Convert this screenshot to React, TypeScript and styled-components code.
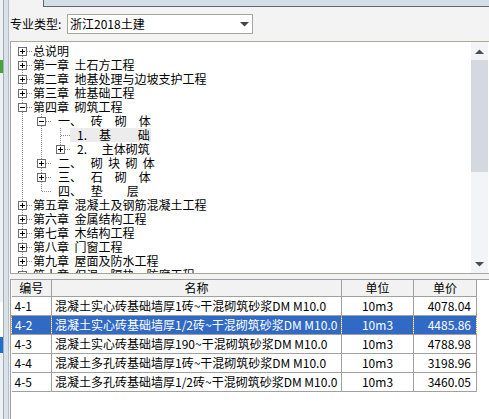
import React from 'react';
import styled, { createGlobalStyle } from 'styled-components';

type Kind = 'plus' | 'minus' | 'leaf';

type TreeItem = {
  text: string;
  level: number;
  kind: Kind;
  guides?: boolean[];
  first?: boolean;
  last?: boolean;
  selected?: boolean;
};

const SP = '\u2002';
const IS = '\u3000';

const TREE: TreeItem[] = [
  { text: '总说明', level: 0, kind: 'plus', first: true },
  { text: '第一章  土石方工程', level: 0, kind: 'plus' },
  { text: '第二章  地基处理与边坡支护工程', level: 0, kind: 'plus' },
  { text: '第三章  桩基础工程', level: 0, kind: 'plus' },
  { text: '第四章  砌筑工程', level: 0, kind: 'minus' },
  { text: `${SP}一、${IS} 砖${IS}砌${IS}体`, level: 1, kind: 'minus', guides: [true] },
  { text: `${SP}1.${IS}基${IS}${IS} 础`, level: 2, kind: 'leaf', guides: [true, true], selected: true },
  { text: `${SP}2.${IS} 主体砌筑`, level: 2, kind: 'plus', guides: [true, true], last: true },
  { text: `${SP}二、${IS} 砌  块  砌  体`, level: 1, kind: 'plus', guides: [true] },
  { text: `${SP}三、${IS} 石${IS}砌${IS}体`, level: 1, kind: 'plus', guides: [true] },
  { text: `${SP}四、${IS} 垫${IS}${IS}层`, level: 1, kind: 'leaf', guides: [true], last: true },
  { text: '第五章  混凝土及钢筋混凝土工程', level: 0, kind: 'plus' },
  { text: '第六章  金属结构工程', level: 0, kind: 'plus' },
  { text: '第七章  木结构工程', level: 0, kind: 'plus' },
  { text: '第八章  门窗工程', level: 0, kind: 'plus' },
  { text: '第九章  屋面及防水工程', level: 0, kind: 'plus' },
  { text: '第十章  保温、隔热、防腐工程', level: 0, kind: 'plus' },
  { text: '第十一章  楼地面装饰工程', level: 0, kind: 'plus' },
];

const ROWS = [
  { code: '4-1', name: '混凝土实心砖基础墙厚1砖~干混砌筑砂浆DM M10.0', unit: '10m3', price: '4078.04' },
  { code: '4-2', name: '混凝土实心砖基础墙厚1/2砖~干混砌筑砂浆DM M10.0', unit: '10m3', price: '4485.86', selected: true },
  { code: '4-3', name: '混凝土实心砖基础墙厚190~干混砌筑砂浆DM M10.0', unit: '10m3', price: '4788.98' },
  { code: '4-4', name: '混凝土多孔砖基础墙厚1砖~干混砌筑砂浆DM M10.0', unit: '10m3', price: '3198.96' },
  { code: '4-5', name: '混凝土多孔砖基础墙厚1/2砖~干混砌筑砂浆DM M10.0', unit: '10m3', price: '3460.05' },
];

const GlobalStyle = createGlobalStyle`
  html, body {
    margin: 0;
    padding: 0;
    background: #f3f3f3;
  }
  body {
    font-family: "Noto Sans CJK SC", "Noto Sans", sans-serif;
    font-size: 12px;
    color: #000;
  }
`;

const Screen = styled.div`
  display: flex;
  width: 489px;
  height: 419px;
  overflow: hidden;
`;

const LeftEdge = styled.div`
  width: 10px;
  flex-shrink: 0;
  display: flex;
  flex-direction: column;
  background: linear-gradient(
    to right,
    #eef1f4 0 3px,
    #a3adb6 3px 4px,
    #d8e1e8 4px 8px,
    #b4bec7 8px 9px,
    #eef0f2 9px 10px
  );
`;

const Mark = styled.div<{ $top: number; $h: number; $color: string }>`
  width: 3px;
  margin-top: ${(p) => p.$top}px;
  height: ${(p) => p.$h}px;
  background: ${(p) => p.$color};
`;

const Main = styled.div`
  flex: 1;
  min-width: 0;
  display: flex;
  flex-direction: column;
`;

const TopBar = styled.div`
  height: 7px;
  display: flex;
  flex-shrink: 0;
`;

const TopGap = styled.div`
  width: 33px;
`;

const TopStrip = styled.div`
  flex: 1;
  background: #d3dee6;
  border-left: 1px solid #5d686e;
  border-bottom: 1px solid #5d686e;
`;

const FilterRow = styled.div`
  height: 34px;
  flex-shrink: 0;
  display: flex;
  align-items: center;
`;

const Label = styled.span`
  width: 57px;
  white-space: nowrap;
  line-height: 14px;
`;

const Combo = styled.div`
  width: 186px;
  height: 20px;
  box-sizing: border-box;
  border: 1px solid #a8a699;
  background: #fff;
  display: flex;
  align-items: center;
  justify-content: space-between;
  padding: 0 3px 0 2px;
  line-height: 14px;
`;

const TreePanel = styled.div`
  height: 233px;
  flex-shrink: 0;
  box-sizing: border-box;
  display: flex;
  background: #fff;
  border-top: 1px solid #a9a79a;
  border-bottom: 1px solid #a9a79a;
  border-left: 1px solid #a0a0a0;
`;

const TreeBody = styled.div`
  flex: 1;
  overflow: hidden;
  padding: 2px 0 0 2px;
`;

const TreeRow = styled.div`
  display: flex;
  height: 14px;
`;

const NodeLabel = styled.span<{ $selected?: boolean }>`
  height: 14px;
  line-height: 14px;
  padding: 0 1px;
  white-space: pre;
  background: ${(p) => (p.$selected ? '#ececec' : 'transparent')};
`;

const Scrollbar = styled.div`
  width: 17px;
  margin-right: 1px;
  display: flex;
  flex-direction: column;
  background: #f3f4f7;
`;

const ScrollBtn = styled.div`
  height: 18px;
  display: flex;
  align-items: center;
  justify-content: center;
`;

const Thumb = styled.div`
  height: 112px;
  background: #d4d9e1;
`;

const Track = styled.div`
  flex: 1;
`;

const GridArea = styled.div`
  flex: 1;
  margin-top: 5px;
  background: #fff;
  border-left: 1px solid #9f9f9f;
  border-top: 1px solid #a0a0a0;
`;

const Table = styled.table`
  border-collapse: collapse;
  table-layout: fixed;
  width: 465px;
`;

const Head = styled.th`
  height: 16px;
  padding: 0;
  font-weight: normal;
  text-align: center;
  line-height: 16px;
  background: #f2f2f2;
  border-right: 1px solid #a0a0a0;
  border-bottom: 1px solid #a0a0a0;
`;

const Cell = styled.td<{ $align?: 'left' | 'center' | 'right'; $selected?: boolean }>`
  height: 18px;
  padding: 0 ${(p) => (p.$align === 'right' ? '5px' : '3px')} 0 3px;
  line-height: 18px;
  white-space: nowrap;
  overflow: hidden;
  text-align: ${(p) => p.$align ?? 'left'};
  border: 1px ${(p) => (p.$selected ? 'dotted #d9a247' : 'solid #a0a0a0')};
  background: ${(p) => (p.$selected ? '#316ac5' : '#fff')};
  color: ${(p) => (p.$selected ? '#fff' : '#000')};
  &:first-child {
    border-left: ${(p) => (p.$selected ? '1px dotted #d9a247' : 'none')};
  }
`;

const Arrow = ({ dir, color = '#4d4d4d' }: { dir: 'up' | 'down'; color?: string }) => (
  <svg width="9" height="5" viewBox="0 0 9 5">
    <polygon points={dir === 'down' ? '0,0 9,0 4.5,4.5' : '0,5 9,5 4.5,0.5'} fill={color} />
  </svg>
);

const Connector = ({ item }: { item: TreeItem }) => {
  const dash = { stroke: '#8a8a8a', strokeDasharray: '1 1', strokeWidth: 1 };
  return (
    <svg width="19" height="14" viewBox="0 0 19 14" style={{ flexShrink: 0 }}>
      {!item.first && <line x1="9.5" y1="0" x2="9.5" y2="7" {...dash} />}
      {!item.last && <line x1="9.5" y1="8" x2="9.5" y2="14" {...dash} />}
      <line x1="10" y1="7.5" x2="19" y2="7.5" {...dash} />
      {item.kind !== 'leaf' && (
        <>
          <rect x="5.5" y="3.5" width="8" height="8" fill="#fff" stroke="#6b6b6b" />
          <line x1="7" y1="7.5" x2="12" y2="7.5" stroke="#000" />
          {item.kind === 'plus' && <line x1="9.5" y1="5" x2="9.5" y2="10" stroke="#000" />}
        </>
      )}
    </svg>
  );
};

const Guide = ({ on }: { on: boolean }) => (
  <svg width="19" height="14" viewBox="0 0 19 14" style={{ flexShrink: 0 }}>
    {on && <line x1="9.5" y1="0" x2="9.5" y2="14" stroke="#8a8a8a" strokeDasharray="1 1" />}
  </svg>
);

const App = () => {
  return (
    <Screen>
      <GlobalStyle />
      <LeftEdge>
        <Mark $top={60} $h={13} $color="#4aa043" />
        <Mark $top={229} $h={35} $color="#ffffff" />
        <Mark $top={0} $h={16} $color="#1f6fd0" />
      </LeftEdge>
      <Main>
        <TopBar>
          <TopGap />
          <TopStrip />
        </TopBar>
        <FilterRow>
          <Label>专业类型:</Label>
          <Combo>
            <span>浙江2018土建</span>
            <Arrow dir="down" color="#444" />
          </Combo>
        </FilterRow>
        <TreePanel>
          <TreeBody>
            {TREE.map((item, i) => (
              <TreeRow key={i}>
                {(item.guides ?? []).map((g, j) => (
                  <Guide key={j} on={g} />
                ))}
                <Connector item={item} />
                <NodeLabel $selected={item.selected}>{item.text}</NodeLabel>
              </TreeRow>
            ))}
          </TreeBody>
          <Scrollbar>
            <ScrollBtn>
              <Arrow dir="up" />
            </ScrollBtn>
            <Thumb />
            <Track />
            <ScrollBtn>
              <Arrow dir="down" />
            </ScrollBtn>
          </Scrollbar>
        </TreePanel>
        <GridArea>
          <Table>
            <colgroup>
              <col style={{ width: 40 }} />
              <col style={{ width: 290 }} />
              <col style={{ width: 72 }} />
              <col style={{ width: 63 }} />
            </colgroup>
            <thead>
              <tr>
                <Head>编号</Head>
                <Head>名称</Head>
                <Head>单位</Head>
                <Head>单价</Head>
              </tr>
            </thead>
            <tbody>
              {ROWS.map((r) => (
                <tr key={r.code}>
                  <Cell $selected={r.selected}>{r.code}</Cell>
                  <Cell $selected={r.selected}>{r.name}</Cell>
                  <Cell $selected={r.selected} $align="center">
                    {r.unit}
                  </Cell>
                  <Cell $selected={r.selected} $align="right">
                    {r.price}
                  </Cell>
                </tr>
              ))}
            </tbody>
          </Table>
        </GridArea>
      </Main>
    </Screen>
  );
};

export default App;
